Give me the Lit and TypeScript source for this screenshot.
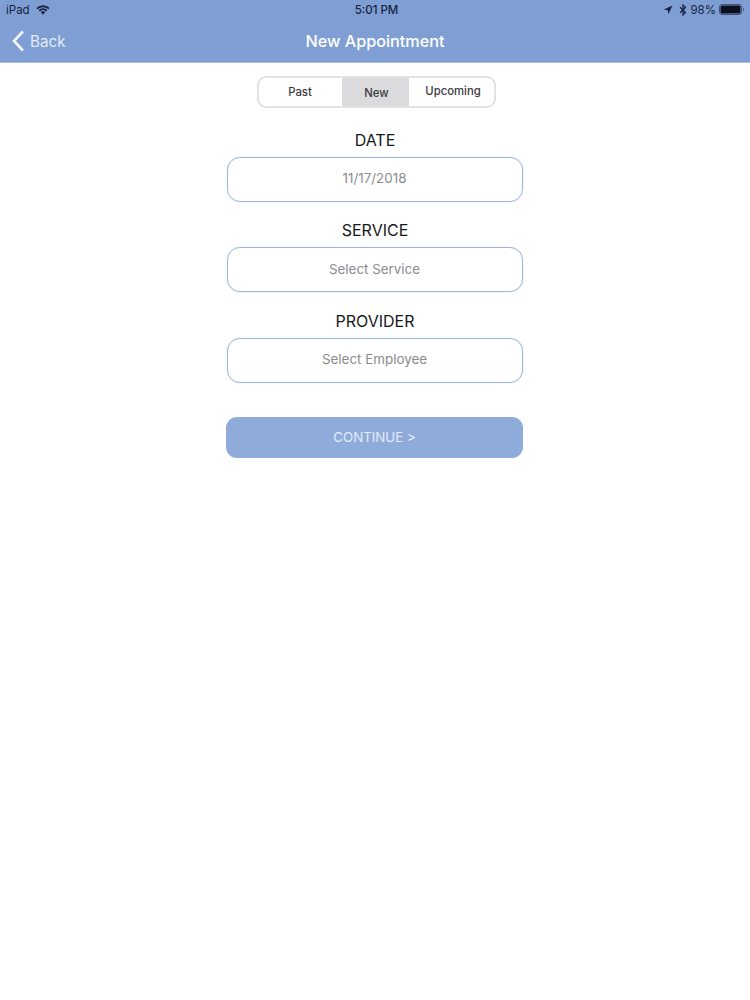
import { LitElement, html, css } from "lit";
import { customElement } from "lit/decorators.js";

@customElement("app-root")
export class AppRoot extends LitElement {
  static styles = css`
    :host { display: block; width: 750px; height: 1000px; background: #fff; font-family: "Inter", "Liberation Sans", sans-serif; overflow: hidden; }
    .header { height: 63px; background: #7f9fd4; display: flex; flex-direction: column; box-sizing: border-box; border-bottom: 1px solid #a9bde0; }
    .status { height: 19px; display: grid; grid-template-columns: 1fr auto 1fr; align-items: center; padding: 0 5px 0 6px; color: #16233f; font-size: 11.5px; }
    .status .left { display: flex; align-items: center; gap: 6px; }
    .status .mid { font-weight: 500; font-size: 11.5px; padding-left: 2px; }
    .status .right { display: flex; align-items: center; justify-content: flex-end; gap: 3px; }
    .status .loc { margin-right: 3px; }
    .nav { flex: 1; display: grid; grid-template-columns: 1fr auto 1fr; align-items: center; padding: 1px 12px 0; color: #fff; }
    .back { display: flex; align-items: center; gap: 5px; font-size: 15.2px; color: #e3ebf8; }
    .title { font-size: 16.2px; font-weight: 500; }
    .main { display: flex; flex-direction: column; align-items: center; padding-top: 13px; }
    .seg { width: 239px; height: 32px; margin-left: 2px; box-sizing: border-box; border: 2px solid #e2e2e4; border-radius: 9px; display: grid; grid-template-columns: 83px 67px 1fr; overflow: hidden; font-size: 11.3px; font-weight: 500; color: #3a3a3e; margin-bottom: 21.6px; }
    .seg div { display: flex; align-items: center; justify-content: center; }
    .seg .on { background: #dbdbdd; padding-top: 1px; padding-left: 3px; box-sizing: border-box; }
    .seg .up { padding-bottom: 2px; padding-left: 4px; }
    .field { display: flex; flex-direction: column; align-items: center; gap: 7px; margin-bottom: 18.5px; }
    .label { font-size: 16px; line-height: 20px; color: #17171a; }
    .box { width: 296px; height: 45px; box-sizing: border-box; border: 1px solid #9db7da; box-shadow: 0 0 1px #a3bcdd; border-radius: 13px; display: flex; align-items: center; justify-content: center; padding: 0 1px 2px 0; font-size: 13.4px; color: #8b8b90; }
    .cta { width: 297px; height: 41px; margin-top: 15.5px; margin-right: 1px; background: #8fabda; border-radius: 11px; display: flex; align-items: center; justify-content: center; font-size: 13.3px; color: #e2ecfa; }
  `;

  render() {
    return html`
      <div class="header">
        <div class="status">
          <div class="left">
            <span>iPad</span>
            <svg width="14" height="10" viewBox="0 0 14 10">
              <path d="M1 3.6 A8.6 8.6 0 0 1 13 3.6" fill="none" stroke="#16233f" stroke-width="2"/>
              <path d="M3.3 5.7 A5.4 5.4 0 0 1 10.7 5.7" fill="none" stroke="#16233f" stroke-width="2"/>
              <path d="M4.8 7.2 A3 3 0 0 1 9.2 7.2 L7 9.8 Z" fill="#16233f"/>
            </svg>
          </div>
          <div class="mid">5:01 PM</div>
          <div class="right">
            <svg class="loc" width="10" height="10" viewBox="0 0 10 10"><path d="M9.5 .5 L.8 4.6 L4.8 5.2 L5.4 9.2 Z" fill="#16233f"/></svg>
            <svg width="8" height="12" viewBox="0 0 8 12"><path d="M1 3.3 L6.5 8.6 L4 11 V1 L6.5 3.4 L1 8.7" fill="none" stroke="#16233f" stroke-width="1.2"/></svg>
            <span>98%</span>
            <svg width="26" height="11" viewBox="0 0 26 11">
              <rect x=".5" y=".5" width="22" height="10" rx="2.5" fill="none" stroke="#16233f" stroke-opacity=".6"/>
              <rect x="1.5" y="1.5" width="20" height="8" rx="1.5" fill="#0b1020"/>
              <path d="M24 3.7 A2 2 0 0 1 24 7.3 Z" fill="#16233f" fill-opacity=".6"/>
            </svg>
          </div>
        </div>
        <div class="nav">
          <div class="back">
            <svg width="13" height="22" viewBox="0 0 13 22"><path d="M11 1.5 L2 11 L11 20.5" fill="none" stroke="#f2f6fc" stroke-width="2.6"/></svg>
            <span>Back</span>
          </div>
          <div class="title">New Appointment</div>
          <div></div>
        </div>
      </div>
      <div class="main">
        <div class="seg">
          <div class="past">Past</div>
          <div class="on">New</div>
          <div class="up">Upcoming</div>
        </div>
        <div class="field"><div class="label">DATE</div><div class="box">11/17/2018</div></div>
        <div class="field"><div class="label">SERVICE</div><div class="box">Select Service</div></div>
        <div class="field"><div class="label">PROVIDER</div><div class="box">Select Employee</div></div>
        <div class="cta">CONTINUE &gt;</div>
      </div>
    `;
  }
}
